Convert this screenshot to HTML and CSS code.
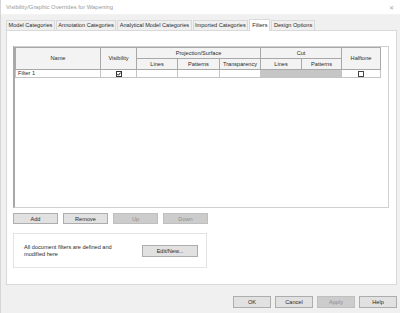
FILE: index.html
```html
<!DOCTYPE html>
<html lang="en">
<head>
    <meta charset="UTF-8">
    <meta name="viewport" content="width=device-width, initial-scale=1.0">
    <title>Visibility/Graphic Overrides</title>
    <link rel="stylesheet" href="styles.css">
</head>
<body>
    <div class="window">
        <div class="titlebar">
            <span class="title">Visibility/Graphic Overrides for Wapening</span>
            <span class="close">&#x2715;</span>
        </div>

        <div class="tabs">
            <div class="tab">Model Categories</div>
            <div class="tab">Annotation Categories</div>
            <div class="tab">Analytical Model Categories</div>
            <div class="tab">Imported Categories</div>
            <div class="tab active">Filters</div>
            <div class="tab">Design Options</div>
        </div>

        <div class="panel">
            <div class="grid">
                <table>
                    <colgroup>
                        <col style="width: 85px">
                        <col style="width: 36px">
                        <col style="width: 41px">
                        <col style="width: 42px">
                        <col style="width: 41px">
                        <col style="width: 41px">
                        <col style="width: 40px">
                        <col style="width: 39px">
                    </colgroup>
                    <thead>
                        <tr>
                            <th rowspan="2">Name</th>
                            <th rowspan="2">Visibility</th>
                            <th colspan="3">Projection/Surface</th>
                            <th colspan="2">Cut</th>
                            <th rowspan="2">Halftone</th>
                        </tr>
                        <tr>
                            <th>Lines</th>
                            <th>Patterns</th>
                            <th>Transparency</th>
                            <th>Lines</th>
                            <th>Patterns</th>
                        </tr>
                    </thead>
                    <tbody>
                        <tr>
                            <td class="name">Filter 1</td>
                            <td class="center">
                                <svg class="check" width="6" height="6" viewBox="0 0 6 6">
                                    <rect x="0.5" y="0.5" width="5" height="5" fill="#fff" stroke="#333"/>
                                    <path d="M1.4 3 L2.5 4.2 L4.6 1.6" fill="none" stroke="#111" stroke-width="1"/>
                                </svg>
                            </td>
                            <td></td>
                            <td></td>
                            <td></td>
                            <td class="shaded"></td>
                            <td class="shaded"></td>
                            <td class="center">
                                <svg class="check" width="6" height="6" viewBox="0 0 6 6">
                                    <rect x="0.5" y="0.5" width="5" height="5" fill="#fff" stroke="#444"/>
                                </svg>
                            </td>
                        </tr>
                    </tbody>
                </table>
            </div>

            <div class="row-buttons">
                <button class="btn">Add</button>
                <button class="btn">Remove</button>
                <button class="btn" disabled>Up</button>
                <button class="btn" disabled>Down</button>
            </div>

            <div class="groupbox">
                <p>All document filters are defined and<br>modified here</p>
                <button class="btn edit">Edit/New...</button>
            </div>
        </div>

        <div class="footer">
            <button class="btn">OK</button>
            <button class="btn">Cancel</button>
            <button class="btn" disabled>Apply</button>
            <button class="btn">Help</button>
        </div>
    </div>
</body>
</html>
```

FILE: styles.css
```css
* {
    margin: 0;
    padding: 0;
    box-sizing: border-box;
}

body {
    font-family: 'Liberation Sans', Arial, sans-serif;
    font-size: 5.6px;
    color: #2a2a2a;
    background: #f0f0f0;
    width: 400px;
    height: 313px;
    overflow: hidden;
}

.window {
    width: 400px;
    height: 313px;
    background: #f0f0f0;
    border-left: 1px solid #d6d6d6;
}

.titlebar {
    height: 15px;
    background: #ffffff;
    display: flex;
    align-items: center;
    justify-content: space-between;
    padding: 0 6px 0 5px;
    border-bottom: 1px solid #f3f3f3;
}

.title {
    color: #9a9a9a;
    font-size: 5.9px;
}

.close {
    color: #a8a8a8;
    font-size: 6px;
}

.tabs {
    display: flex;
    align-items: flex-end;
    height: 15px;
    padding-left: 5px;
}

.tab {
    height: 10px;
    line-height: 9px;
    padding: 0 1.5px;
    margin-right: 1px;
    background: #f0f0f0;
    border: 1px solid #d9d9d9;
    border-bottom: none;
    white-space: nowrap;
}

.tab.active {
    height: 12px;
    margin-bottom: -1px;
    padding: 0 2px;
    background: #ffffff;
    line-height: 10px;
    position: relative;
    z-index: 1;
}

.panel {
    width: 391px;
    height: 255px;
    background: #ffffff;
    border: 1px solid #d9d9d9;
    padding: 15px 6px 0 6px;
    margin-left: 5px;
}

.grid {
    width: 376px;
    height: 162px;
    border: 1px solid #d0d0d0;
    border-left: 2px solid #a8a8a8;
    background: #ffffff;
}

table {
    border-collapse: collapse;
    table-layout: fixed;
    width: 365px;
}

th {
    height: 11px;
    font-weight: normal;
    background: #f3f3f3;
    border: 1px solid #a8a8a8;
    text-align: center;
    line-height: 9px;
}

td {
    height: 8px;
    border: 1px solid #c4c4c4;
    line-height: 7px;
}

td.name {
    padding-left: 2px;
}

td.center {
    text-align: center;
}

td.shaded {
    background: #c6c6c6;
}

.check {
    display: inline-block;
    vertical-align: middle;
}

.row-buttons {
    display: flex;
    gap: 5px;
    margin-top: 5px;
}

.btn {
    width: 45px;
    height: 11px;
    font-family: inherit;
    font-size: 5.6px;
    color: #2a2a2a;
    background: #e1e1e1;
    border: 1px solid #adadad;
}

.btn:disabled {
    background: #cccccc;
    border-color: #bfbfbf;
    color: #8d8d8d;
}

.groupbox {
    width: 194px;
    height: 35px;
    margin-top: 9px;
    border: 1px solid #e3e3e3;
    display: flex;
    align-items: center;
    justify-content: space-between;
    padding: 0 8px 0 10px;
}

.groupbox p {
    line-height: 7px;
}

.btn.edit {
    width: 56px;
    height: 12px;
}

.footer {
    display: flex;
    justify-content: flex-end;
    gap: 4px;
    padding: 11px 3px 0 0;
}

.footer .btn {
    width: 38px;
    height: 12px;
}
```
